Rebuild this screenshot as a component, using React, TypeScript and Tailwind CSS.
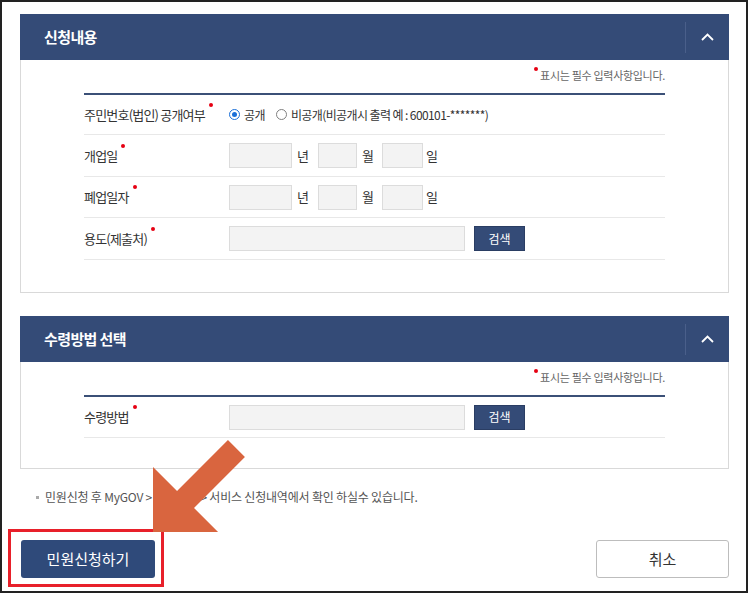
import React from "react";

const FONT = "font-['Noto_Sans_CJK_KR','Noto_Sans',sans-serif]";

function Dot({ cls }: { cls: string }) {
  return <span className={`absolute w-[4px] h-[4px] rounded-full bg-[#e60012] ${cls}`} />;
}

function Header({ title }: { title: string }) {
  return (
    <div className="h-[46px] bg-[#344b77] flex items-center justify-between">
      <span className="pl-[24px] text-white text-[15px] font-bold tracking-[-0.6px]">{title}</span>
      <div className="h-[31px] w-[44px] border-l border-[#4a5f8a] flex items-center justify-center">
        <svg width="13" height="8" viewBox="0 0 13 8">
          <path d="M1 7 L6.5 1.5 L12 7" stroke="white" strokeWidth="1.8" fill="none" />
        </svg>
      </div>
    </div>
  );
}

function Note() {
  return (
    <div className="h-[33px] flex items-center justify-end pb-[2px]">
      <span className="relative pl-[5px] text-[11px] text-[#666] tracking-[-0.3px]">
        <Dot cls="left-[-1px] top-[0px]" />
        표시는 필수 입력사항입니다.
      </span>
    </div>
  );
}

function Label({ children }: { children: React.ReactNode }) {
  return (
    <div className="w-[145px] shrink-0 text-[13px] text-[#333] tracking-[-0.8px]">
      <span className="relative">
        {children}
        <Dot cls="right-[-8px] top-[-2px]" />
      </span>
    </div>
  );
}

function Input({ w }: { w: string }) {
  return <input className={`${w} h-[25px] border border-[#dcdcdc] bg-[#f3f3f3] outline-none`} />;
}

function Radio({ checked }: { checked?: boolean }) {
  return checked ? (
    <span className="shrink-0 w-[11px] h-[11px] rounded-full border border-[#1a6fd8] bg-white flex items-center justify-center">
      <span className="w-[5px] h-[5px] rounded-full bg-[#1a6fd8]" />
    </span>
  ) : (
    <span className="shrink-0 w-[11px] h-[11px] rounded-full border border-[#808080] bg-white" />
  );
}

function SearchBtn() {
  return (
    <button className="ml-[9px] w-[51px] h-[25px] bg-[#344b77] border border-[#2a3d63] text-white text-[12px]">
      검색
    </button>
  );
}

function DateInputs() {
  return (
    <div className="flex items-center text-[13px] text-[#333]">
      <Input w="w-[63px]" />
      <span className="ml-[5px] w-[21px]">년</span>
      <Input w="w-[39px]" />
      <span className="ml-[5px] w-[20px]">월</span>
      <Input w="w-[41px]" />
      <span className="ml-[3px]">일</span>
    </div>
  );
}

export default function App() {
  return (
    <div className={`relative w-[748px] h-[593px] border-2 border-[#222] bg-white ${FONT}`}>
      {/* Section 1 */}
      <div className="ml-[18px] mt-[12px] w-[709px]">
        <Header title="신청내용" />
        <div className="border border-t-0 border-[#d9d9d9] px-[63px] pb-[32px]">
          <Note />
          <div className="border-t-2 border-[#3b5077]">
            <div className="h-[40px] flex items-center border-b border-[#e8e8e8]">
              <Label>주민번호(법인) 공개여부</Label>
              <div className="flex items-center text-[12px] text-[#333] tracking-[-0.6px]">
                <Radio checked />
                <span className="ml-[4px]">공개</span>
                <span className="ml-[11px] flex items-center">
                  <Radio />
                </span>
                <span className="ml-[4px]">비공개(비공개시 출력 예 : 600101-*******)</span>
              </div>
            </div>
            <div className="h-[42px] flex items-center border-b border-[#e8e8e8]">
              <Label>개업일</Label>
              <DateInputs />
            </div>
            <div className="h-[41px] flex items-center border-b border-[#e8e8e8]">
              <Label>폐업일자</Label>
              <DateInputs />
            </div>
            <div className="h-[42px] flex items-center border-b border-[#e8e8e8]">
              <Label>용도(제출처)</Label>
              <Input w="w-[236px]" />
              <SearchBtn />
            </div>
          </div>
        </div>
      </div>

      {/* Section 2 */}
      <div className="ml-[18px] mt-[23px] w-[709px]">
        <Header title="수령방법 선택" />
        <div className="border border-t-0 border-[#d9d9d9] px-[63px] pb-[30px]">
          <Note />
          <div className="border-t-2 border-[#3b5077]">
            <div className="h-[41px] flex items-center border-b border-[#e8e8e8]">
              <Label>수령방법</Label>
              <Input w="w-[236px]" />
              <SearchBtn />
            </div>
          </div>
        </div>
      </div>

      {/* Footnote */}
      <div className="ml-[34px] mt-[19px] flex items-center text-[12px] text-[#555] tracking-[-0.2px]">
        <span className="w-[3px] h-[3px] bg-[#aaa] mr-[6px]" />
        <span>민원신청 후 MyGOV &gt; 나의민원 &gt; 서비스 신청내역에서 확인 하실수 있습니다.</span>
      </div>

      {/* Buttons */}
      <div className="ml-[19px] mr-[17px] mt-[34px] flex justify-between">
        <div className="relative">
          <button className="w-[134px] h-[38px] rounded-[3px] bg-[#2f4a7a] text-white text-[15px]">
            민원신청하기
          </button>
          <span className="absolute left-[-13px] top-[-11px] w-[156px] h-[58px] border-[3px] border-[#e8202a] pointer-events-none" />
        </div>
        <button className="w-[133px] h-[38px] rounded-[3px] bg-white border border-[#bdbdbd] text-[#333] text-[15px]">
          취소
        </button>
      </div>

      {/* Arrow annotation */}
      <svg className="absolute left-[-2px] top-[-2px] pointer-events-none" width="750" height="595" viewBox="0 0 750 595">
        <g transform="translate(153 532) rotate(135) translate(-118 0)">
          <polygon points="0,-12 72,-12 72,-46 118,0 72,46 72,12 0,12" fill="#d9653f" />
        </g>
      </svg>
    </div>
  );
}
